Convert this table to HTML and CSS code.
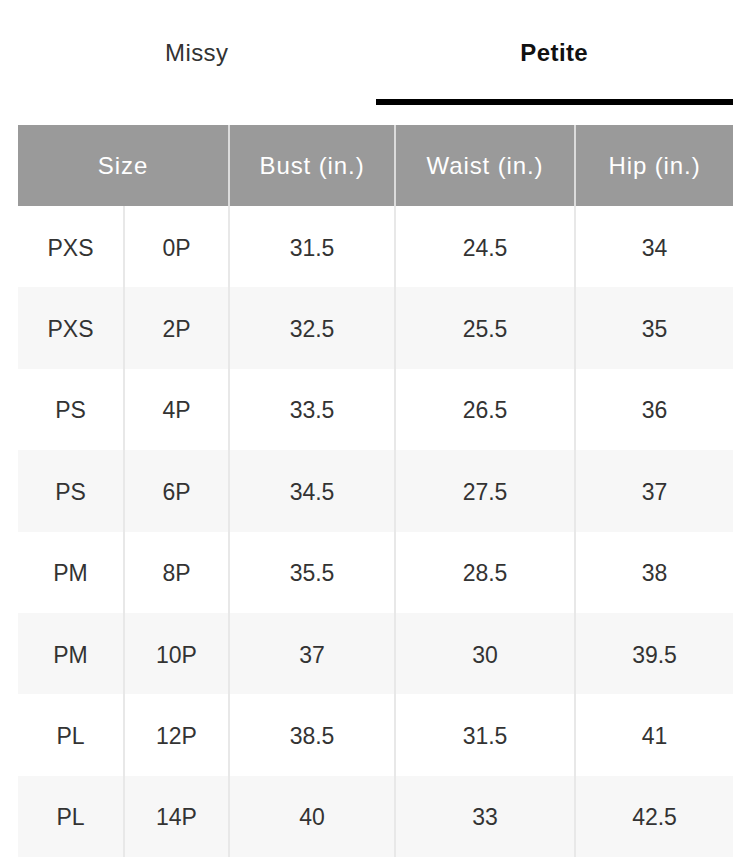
FILE: index.html
```html
<!DOCTYPE html>
<html>
<head>
<meta charset="utf-8">
<link rel="stylesheet" href="styles.css">
</head>
<body>
<div class="wrap">
  <div class="tabs">
    <div class="tab">Missy</div>
    <div class="tab active">Petite</div>
  </div>
  <table class="chart">
    <colgroup>
      <col class="c1"><col class="c2"><col class="c3"><col class="c4"><col class="c5">
    </colgroup>
    <thead>
      <tr><th colspan="2">Size</th><th>Bust (in.)</th><th>Waist (in.)</th><th>Hip (in.)</th></tr>
    </thead>
    <tbody>
      <tr><td>PXS</td><td>0P</td><td>31.5</td><td>24.5</td><td>34</td></tr>
      <tr><td>PXS</td><td>2P</td><td>32.5</td><td>25.5</td><td>35</td></tr>
      <tr><td>PS</td><td>4P</td><td>33.5</td><td>26.5</td><td>36</td></tr>
      <tr><td>PS</td><td>6P</td><td>34.5</td><td>27.5</td><td>37</td></tr>
      <tr><td>PM</td><td>8P</td><td>35.5</td><td>28.5</td><td>38</td></tr>
      <tr><td>PM</td><td>10P</td><td>37</td><td>30</td><td>39.5</td></tr>
      <tr><td>PL</td><td>12P</td><td>38.5</td><td>31.5</td><td>41</td></tr>
      <tr><td>PL</td><td>14P</td><td>40</td><td>33</td><td>42.5</td></tr>
    </tbody>
  </table>
</div>
</body>
</html>
```
FILE: styles.css
```css
html, body {
  margin: 0;
  padding: 0;
  background: #ffffff;
}
body {
  font-family: "Liberation Sans", Arial, sans-serif;
  color: #333333;
}
.wrap {
  margin-left: 18px;
  width: 715px;
}
.tabs {
  display: flex;
  margin-bottom: 20px;
}
.tab {
  flex: 1 1 0;
  text-align: center;
  font-size: 24px;
  line-height: 24px;
  letter-spacing: 0.4px;
  padding-top: 41px;
  padding-bottom: 34px;
  border-bottom: 6px solid transparent;
  color: #333333;
}
.tab.active {
  font-weight: bold;
  color: #111111;
  border-bottom-color: #000000;
}
.chart {
  width: 715px;
  border-collapse: collapse;
  table-layout: fixed;
}
.c1 { width: 106px; }
.c2 { width: 105px; }
.c3 { width: 166px; }
.c4 { width: 180px; }
.c5 { width: 158px; }
.chart th {
  height: 81px;
  padding: 0;
  background: #9a9a9a;
  color: #ffffff;
  font-weight: normal;
  font-size: 24px;
  letter-spacing: 0.9px;
  text-align: center;
  vertical-align: middle;
  border-left: 2px solid #dcdcdc;
}
.chart th:first-child {
  border-left: none;
}
.chart td {
  height: 81.375px;
  padding: 3px 0 0 0;
  box-sizing: border-box;
  font-size: 23px;
  color: #333333;
  text-align: center;
  vertical-align: middle;
  border-left: 2px solid #e8e8e8;
}
.chart td:first-child {
  border-left: none;
}
.chart tbody tr:nth-child(even) td {
  background: #f7f7f7;
}
```
